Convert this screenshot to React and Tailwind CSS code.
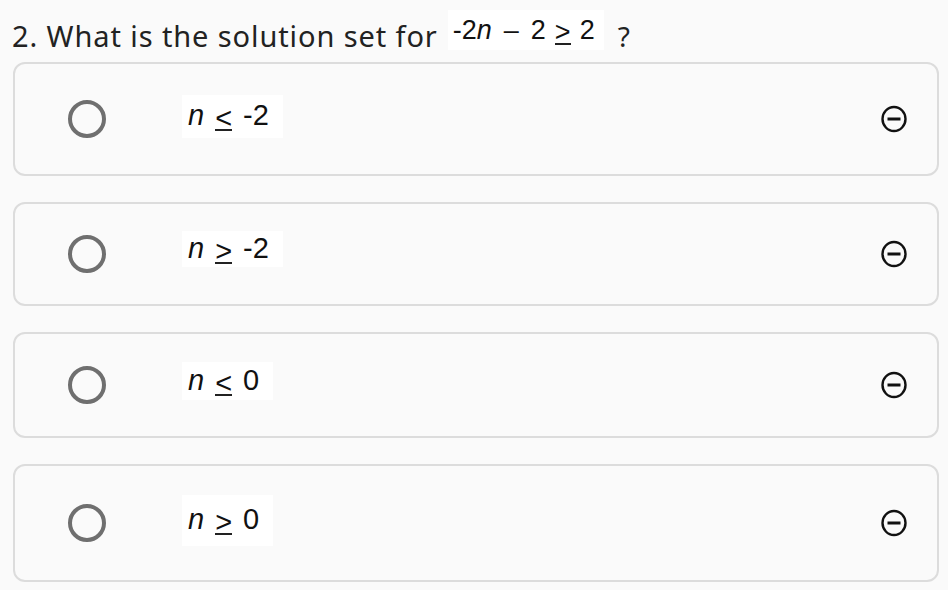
const options = [
  { sym: '<', val: '-2', h: 'h-[114px]', pt: 'pb-[6px]', bh: 'h-[43px]' },
  { sym: '>', val: '-2', h: 'h-[104px]', pt: 'pb-[10px]', bh: 'h-[36px]' },
  { sym: '<', val: '0', h: 'h-[106px]', pt: 'pb-[8px]', bh: 'h-[38px]' },
  { sym: '>', val: '0', h: 'h-[118px]', pt: 'pb-[6px]', bh: 'h-[51px]' },
]

function Radio() {
  return <div className="w-[38px] h-[38px] rounded-full border-[4px] border-[#6f6f6f] shrink-0" />
}

function MinusCircle() {
  return (
    <svg width="28" height="28" viewBox="0 0 28 28" fill="none">
      <ellipse cx="14" cy="14" rx="11.5" ry="12" stroke="#111" strokeWidth="2.4" />
      <line x1="7.5" y1="14" x2="20.5" y2="14" stroke="#111" strokeWidth="3" />
    </svg>
  )
}

function Rel({ sym, size = 'text-[29px]', mx = 'mx-[11px]' }) {
  return (
    <span className={`inline-block border-b-[2px] border-[#222] leading-[22px] h-[24px] ${mx} ${size} translate-y-[3px]`}>
      {sym}
    </span>
  )
}

export default function App() {
  return (
    <div className="w-[948px] h-[590px] bg-[#fafafa] overflow-hidden">
      <div className="flex items-center h-[62px] pl-[12px] pt-[10px]">
        <span className="text-[29px] text-[#222] font-['Noto_Sans',sans-serif] tracking-[0.9px]">
          2. What is the solution set for
        </span>
        <span className="ml-[10px] bg-white px-[5px] h-[40px] flex items-center font-['Liberation_Sans',sans-serif] text-[27px] text-[#111] -translate-y-[6px]">
          -2<i>n</i>
          <span className="mx-[12px]">–</span>2<Rel sym=">" size="text-[27px]" mx="mx-[9px]" />2
          <span className="w-[4px]" />
        </span>
        <span className="ml-[14px] text-[28px] text-[#222] font-['Noto_Sans',sans-serif]">?</span>
      </div>
      <div className="flex flex-col gap-[26px] pl-[13px] w-[939px]">
        {options.map((o, i) => (
          <div
            key={i}
            className={`${o.h} rounded-[12px] border-[2px] border-[#dcdcdc] bg-[#fafafa] flex items-center pl-[53px] pr-[29px]`}
          >
            <Radio />
            <div className={`ml-[76px] ${o.pt}`}>
              <div className={`bg-white ${o.bh} px-[6px] flex items-center font-['Liberation_Sans',sans-serif] text-[29px] text-[#111]`}>
                <i>n</i>
                <Rel sym={o.sym} />
                <span>{o.val}</span>
                <span className="w-[8px]" />
              </div>
            </div>
            <div className="ml-auto">
              <MinusCircle />
            </div>
          </div>
        ))}
      </div>
    </div>
  )
}
